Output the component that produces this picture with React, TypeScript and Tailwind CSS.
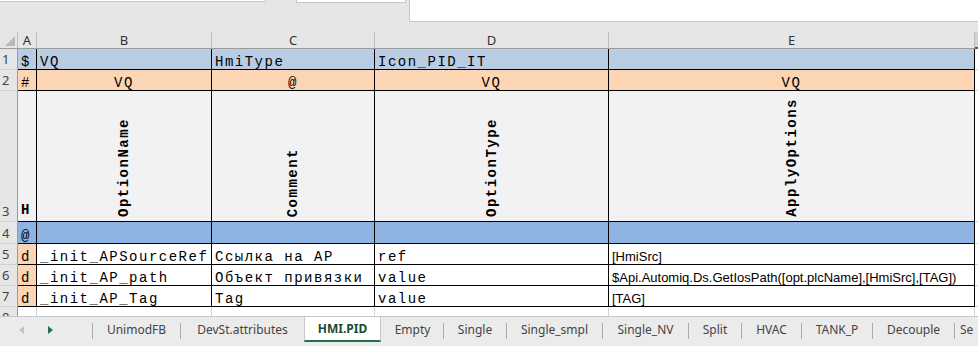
import type { ReactNode } from "react";

const grid = "grid grid-cols-[18px_19px_175px_163px_234px_366px_1fr]";
const mono = "font-['Liberation_Mono','Courier_New',monospace] text-[14px] leading-[14px] tracking-[1.5px] text-black";
const arial = "font-['Liberation_Sans',Arial,sans-serif] text-[13px] leading-[14px] text-black";
const ui = "font-['Noto_Sans','Open_Sans',sans-serif]";

type Tab = { name: string; width: string; sep: boolean; active?: boolean; left?: boolean };

const tabs: Tab[] = [
  { name: "UnimodFB", width: "w-[88px]", sep: true },
  { name: "DevSt.attributes", width: "w-[124px]", sep: true },
  { name: "HMI.PID", width: "w-[77px]", sep: false, active: true },
  { name: "Empty", width: "w-[62px]", sep: false },
  { name: "Single", width: "w-[63px]", sep: true },
  { name: "Single_smpl", width: "w-[96px]", sep: true },
  { name: "Single_NV", width: "w-[86px]", sep: true },
  { name: "Split", width: "w-[53px]", sep: true },
  { name: "HVAC", width: "w-[60px]", sep: true },
  { name: "TANK_P", width: "w-[71px]", sep: true },
  { name: "Decouple", width: "w-[82px]", sep: true },
  { name: "Se", width: "w-[40px]", sep: true, left: true },
];

function RowHead({ n, className = "" }: { n: string; className?: string }) {
  return (
    <div
      className={`flex items-end pl-[2px] pb-[3px] bg-[#e6e6e6] border-r border-b border-r-[#9b9b9b] border-b-[#d0d0d0] text-[13px] leading-[13px] text-[#444] ${ui} ${className}`}
    >
      {n}
    </div>
  );
}

function Cell({ children, className = "" }: { children?: ReactNode; className?: string }) {
  return (
    <div className={`flex items-end px-[3px] border-r border-b border-black overflow-hidden whitespace-nowrap ${className}`}>
      {children}
    </div>
  );
}

function Vertical({ text }: { text: string }) {
  return (
    <div className="flex items-end justify-center pb-[4px] border-r border-b border-black bg-[#f2f2f2]">
      <span className={`[writing-mode:vertical-rl] rotate-180 font-bold ${mono}`}>{text}</span>
    </div>
  );
}

function Blank({ className = "" }: { className?: string }) {
  return <div className={`border-b border-[#d4d4d4] bg-white ${className}`} />;
}

export default function App() {
  return (
    <div className="w-[978px] h-[346px] flex flex-col overflow-hidden bg-[#e6e6e6]">
      {/* formula bar remains */}
      <div className="h-[32px] shrink-0 flex items-start">
        <div className="w-[266px] h-[2px] bg-white border-b border-r border-[#c6c6c6]" />
        <div className="ml-[30px] w-[110px] h-[3px] bg-white border-b border-x border-[#c6c6c6]" />
        <div className="ml-[3px] flex-1 h-[22px] bg-white border-l border-b border-[#c6c6c6]" />
      </div>

      {/* sheet */}
      <div className="h-[284px] shrink-0 overflow-hidden bg-white">
        {/* column letters */}
        <div className={`${grid} h-[17px] bg-[#e6e6e6] text-[13px] leading-[13px] text-[#333] ${ui}`}>
          <div className="flex items-end justify-end pr-[2px] pb-[2px] border-r border-b border-r-[#bdbdbd] border-b-[#9b9b9b]">
            <svg width="10" height="10" viewBox="0 0 10 10">
              <polygon points="10,0 10,10 0,10" fill="#b9b9b9" />
            </svg>
          </div>
          {["A", "B", "C", "D", "E"].map((c) => (
            <div key={c} className="flex items-center justify-center border-r border-b border-r-[#bdbdbd] border-b-[#9b9b9b]">
              {c}
            </div>
          ))}
          <div className="bg-[#d2d2d2] border-b-2 border-[#217346]" />
        </div>

        {/* row 1 */}
        <div className={`${grid} h-[21px]`}>
          <RowHead n="1" />
          <Cell className={`bg-[#b8cce4] ${mono}`}>$</Cell>
          <Cell className={`bg-[#b8cce4] ${mono}`}>VQ</Cell>
          <Cell className={`bg-[#b8cce4] ${mono}`}>HmiType</Cell>
          <Cell className={`bg-[#b8cce4] ${mono}`}>Icon_PID_IT</Cell>
          <Cell className="bg-[#b8cce4]" />
          <Blank />
        </div>

        {/* row 2 */}
        <div className={`${grid} h-[21px]`}>
          <RowHead n="2" />
          <Cell className={`bg-[#fcd5b4] ${mono}`}>#</Cell>
          <Cell className={`bg-[#fcd5b4] justify-center ${mono}`}>VQ</Cell>
          <Cell className={`bg-[#fcd5b4] justify-center ${mono}`}>@</Cell>
          <Cell className={`bg-[#fcd5b4] justify-center ${mono}`}>VQ</Cell>
          <Cell className={`bg-[#fcd5b4] justify-center ${mono}`}>VQ</Cell>
          <Blank />
        </div>

        {/* row 3 - rotated headers */}
        <div className={`${grid} h-[131px]`}>
          <RowHead n="3" />
          <Cell className={`bg-[#f2f2f2] pb-[4px] font-bold ${mono}`}>H</Cell>
          <Vertical text="OptionName" />
          <Vertical text="Comment" />
          <Vertical text="OptionType" />
          <Vertical text="ApplyOptions" />
          <Blank />
        </div>

        {/* row 4 */}
        <div className={`${grid} h-[22px]`}>
          <RowHead n="4" />
          <Cell className={`bg-[#8db4e2] ${mono}`}>@</Cell>
          <Cell className="bg-[#8db4e2]" />
          <Cell className="bg-[#8db4e2]" />
          <Cell className="bg-[#8db4e2]" />
          <Cell className="bg-[#8db4e2]" />
          <Blank />
        </div>

        {/* rows 5-7 */}
        {[
          ["5", "_init_APSourceRef", "Ссылка на AP", "ref", "[HmiSrc]"],
          ["6", "_init_AP_path", "Объект привязки", "value", "$Api.Automiq.Ds.GetIosPath([opt.plcName],[HmiSrc],[TAG])"],
          ["7", "_init_AP_Tag", "Tag", "value", "[TAG]"],
        ].map(([n, name, comment, type, apply]) => (
          <div key={n} className={`${grid} h-[21px]`}>
            <RowHead n={n} />
            <Cell className={`bg-[#fcd5b4] ${mono}`}>d</Cell>
            <Cell className={`bg-white ${mono}`}>{name}</Cell>
            <Cell className={`bg-white ${mono}`}>{comment}</Cell>
            <Cell className={`bg-white ${mono}`}>{type}</Cell>
            <Cell className={`bg-white ${arial}`}>{apply}</Cell>
            <Blank />
          </div>
        ))}

        {/* row 8 (cut off) */}
        <div className={`${grid} h-[21px]`}>
          <RowHead n="8" />
          <div className="border-r border-[#d4d4d4]" />
          <div className="border-r border-[#d4d4d4]" />
          <div className="border-r border-[#d4d4d4]" />
          <div className="border-r border-[#d4d4d4]" />
          <div className="border-r border-[#d4d4d4]" />
          <div />
        </div>
      </div>

      {/* sheet tabs */}
      <div className={`h-[30px] shrink-0 flex items-start bg-[#ebebeb] border-t border-[#c6c6c6] text-[12px] text-[#444] ${ui}`}>
        <div className="w-[92px] h-[25px] flex items-center shrink-0">
          <svg className="ml-[19px]" width="5" height="8" viewBox="0 0 5 8">
            <polygon points="5,0 5,8 0,4" fill="#c4c4c4" />
          </svg>
          <svg className="ml-[24px]" width="5" height="8" viewBox="0 0 5 8">
            <polygon points="0,0 5,4 0,8" fill="#217346" />
          </svg>
        </div>
        {tabs.map((t) =>
          t.active ? (
            <div
              key={t.name}
              className={`${t.width} shrink-0 h-[25px] flex items-center justify-center bg-white border-x border-[#c6c6c6] border-b-2 border-b-[#217346] font-bold text-[#1b4a30]`}
            >
              {t.name}
            </div>
          ) : (
            <div key={t.name} className={`${t.width} shrink-0 h-[25px] flex items-center whitespace-nowrap`}>
              <div className={`w-px h-[16px] mt-[2px] shrink-0 ${t.sep ? "bg-[#ababab]" : ""}`} />
              <div className={t.left ? "flex-1 pl-[5px]" : "flex-1 text-center"}>{t.name}</div>
            </div>
          )
        )}
      </div>
    </div>
  );
}
